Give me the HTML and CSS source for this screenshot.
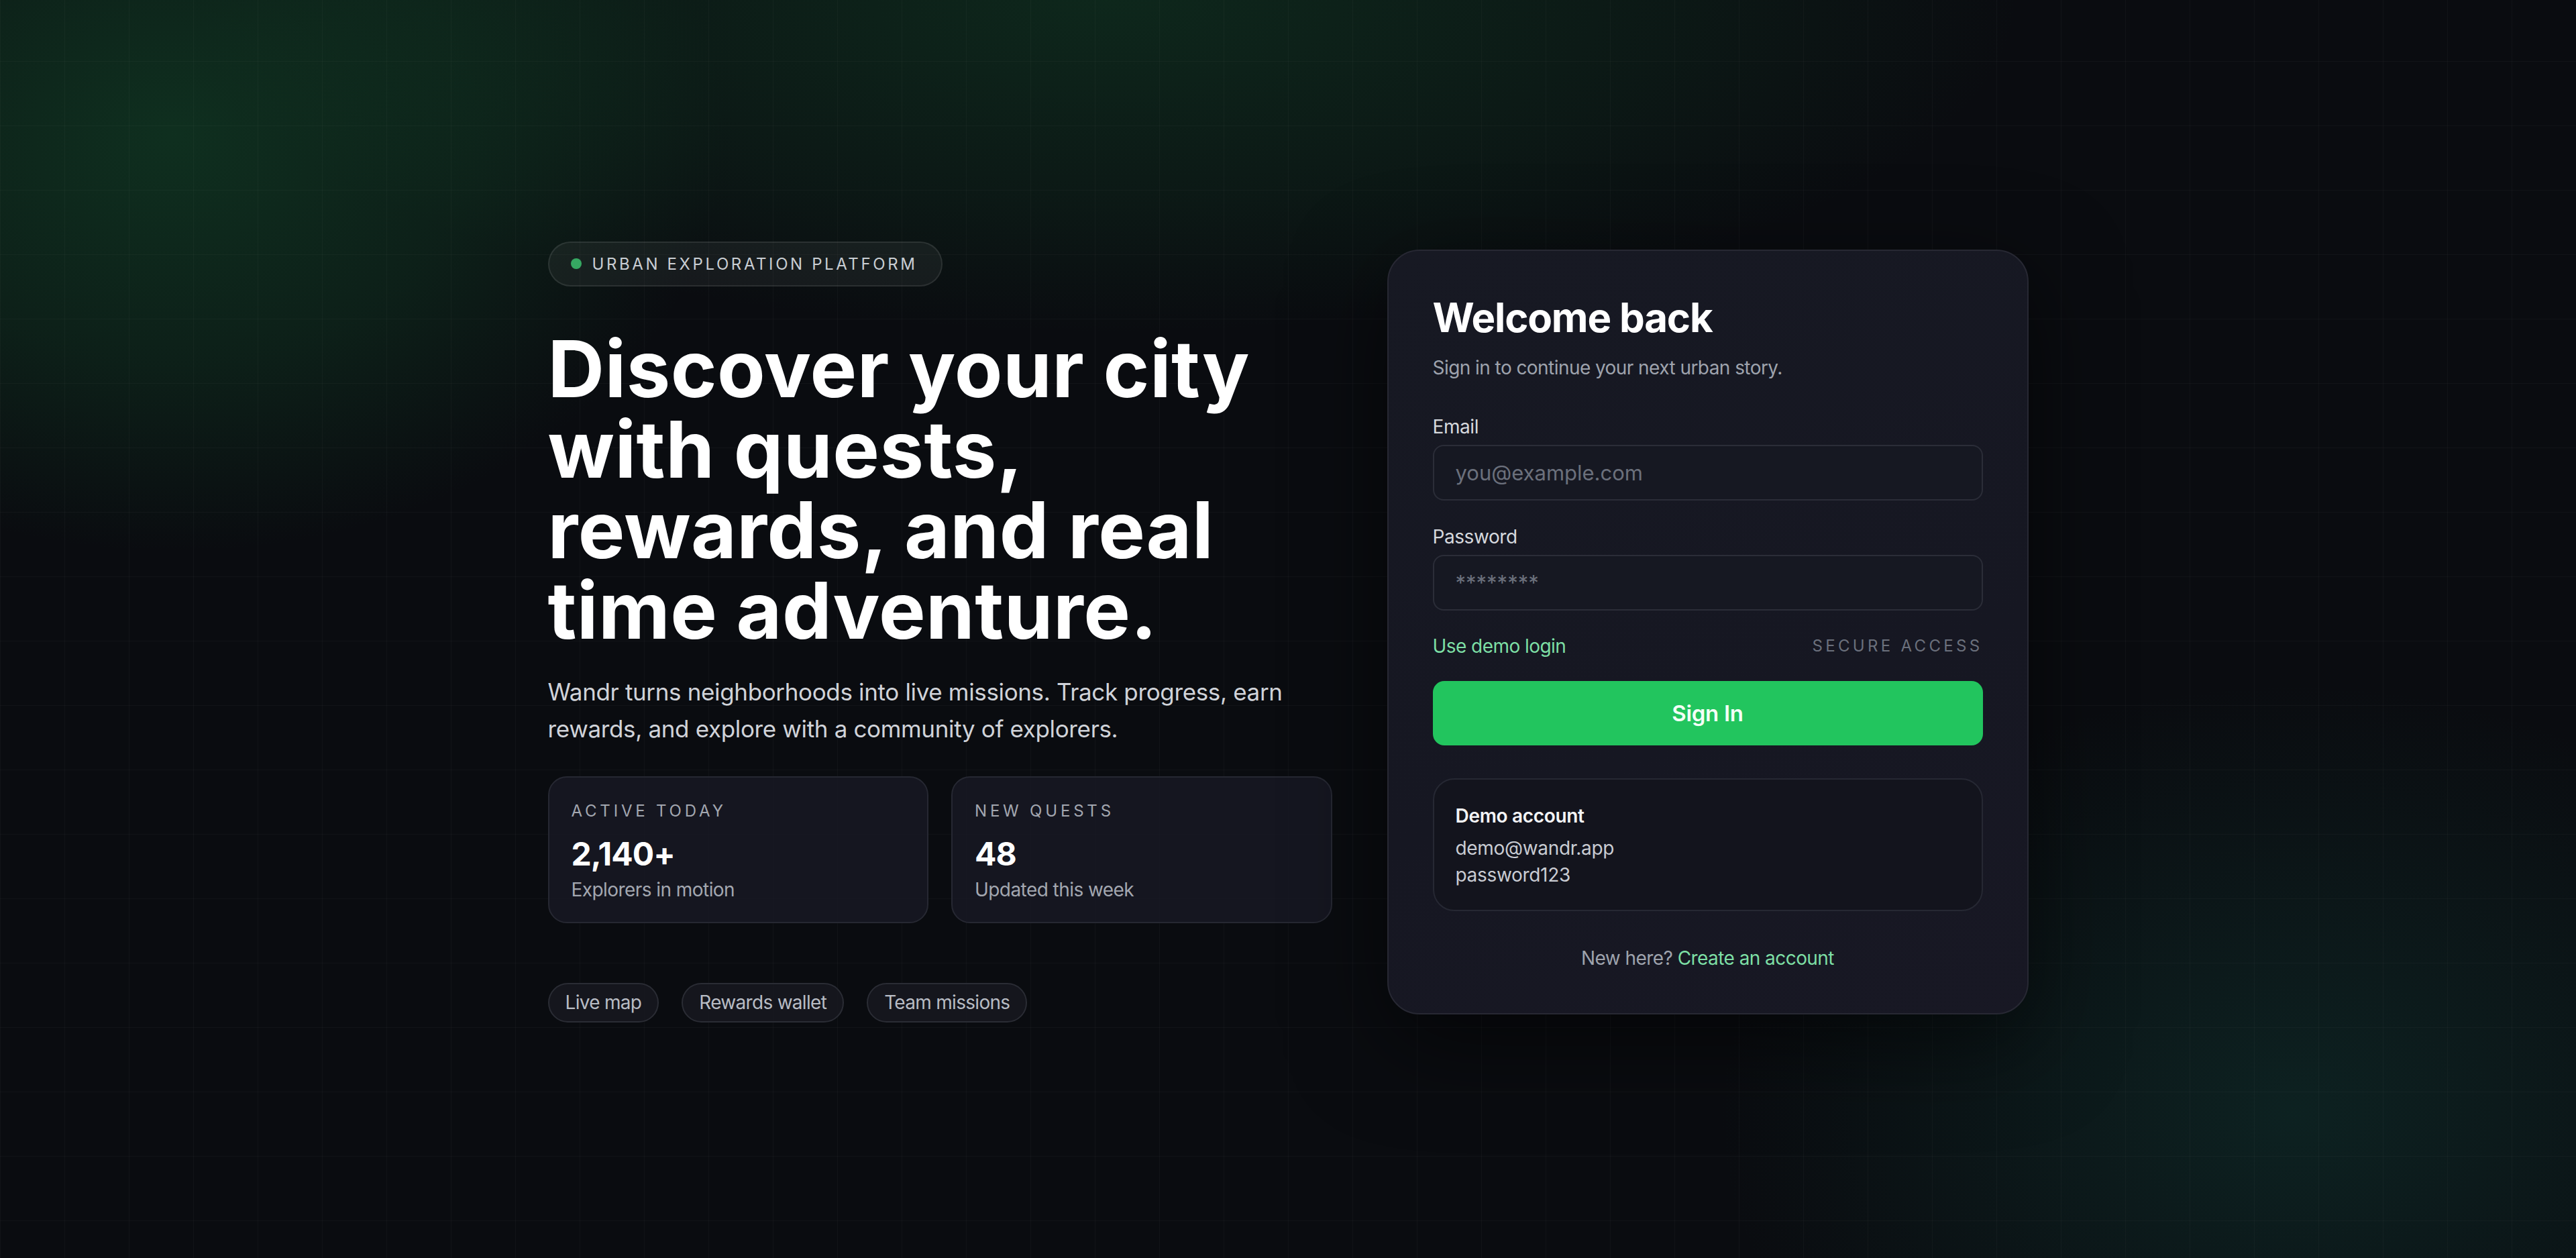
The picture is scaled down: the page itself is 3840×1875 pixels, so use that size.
FILE: index.html
```html
<!DOCTYPE html>
<html lang="en">
<head>
<meta charset="utf-8">
<title>Wandr — Sign in</title>
<link rel="stylesheet" href="styles.css">
</head>
<body>
<main class="page">
  <section class="hero">
    <div class="badge"><span class="badge-dot"></span><span class="badge-text">URBAN EXPLORATION PLATFORM</span></div>
    <h1 class="headline">Discover your city with quests, rewards, and real time adventure.</h1>
    <p class="lead">Wandr turns neighborhoods into live missions. Track progress, earn rewards, and explore with a community of explorers.</p>
    <div class="stats">
      <div class="stat">
        <div class="stat-label">ACTIVE TODAY</div>
        <div class="stat-value">2,140+</div>
        <div class="stat-note">Explorers in motion</div>
      </div>
      <div class="stat">
        <div class="stat-label">NEW QUESTS</div>
        <div class="stat-value">48</div>
        <div class="stat-note">Updated this week</div>
      </div>
    </div>
    <div class="chips">
      <span class="chip">Live map</span>
      <span class="chip">Rewards wallet</span>
      <span class="chip">Team missions</span>
    </div>
  </section>

  <section class="card">
    <h2 class="card-title">Welcome back</h2>
    <p class="card-sub">Sign in to continue your next urban story.</p>
    <form class="form">
      <label class="field-label" for="email">Email</label>
      <input class="field" id="email" type="email" placeholder="you@example.com">
      <label class="field-label field-label-2" for="password">Password</label>
      <input class="field" id="password" type="text" placeholder="********">
      <div class="form-row">
        <a class="demo-link" href="#">Use demo login</a>
        <span class="secure">SECURE ACCESS</span>
      </div>
      <button class="btn" type="button">Sign In</button>
    </form>
    <div class="demo-box">
      <div class="demo-title">Demo account</div>
      <div class="demo-line">demo@wandr.app</div>
      <div class="demo-line">password123</div>
    </div>
    <p class="footer-note">New here? <a class="create-link" href="#">Create an account</a></p>
  </section>
</main>
</body>
</html>
```

FILE: styles.css
```css
* { box-sizing: border-box; }

html, body {
  margin: 0;
  padding: 0;
}

body {
  min-height: 100vh;
  font-family: "Inter", "Noto Sans", sans-serif;
  color: #e5e7eb;
  background-color: #0a0c10;
  background-image:
    linear-gradient(to right, rgba(255,255,255,0.028) 1px, transparent 1px),
    linear-gradient(to bottom, rgba(255,255,255,0.028) 1px, transparent 1px),
    radial-gradient(ellipse 1000px 760px at 260px 200px, rgba(24,110,58,0.36), rgba(24,110,58,0.2) 45%, transparent 82%),
    radial-gradient(ellipse 1700px 620px at 1650px 0px, rgba(24,110,58,0.28), rgba(24,110,58,0.12) 50%, transparent 80%),
    radial-gradient(ellipse 1100px 820px at 3420px 1660px, rgba(22,95,82,0.26), transparent 78%);
  background-size: 96px 96px, 96px 96px, auto, auto, auto;
  background-position: 0 0, 0 -5px, 0 0, 0 0, 0 0;
}

.page {
  min-height: 100vh;
  padding-top: 8px;
  display: grid;
  grid-template-columns: 1169px 956px;
  column-gap: 82px;
  justify-content: center;
  align-items: center;
}

/* ---------- hero ---------- */
.hero {
  display: flex;
  flex-direction: column;
  align-items: flex-start;
}

.badge {
  display: inline-flex;
  align-items: center;
  gap: 16px;
  height: 67px;
  padding: 0 35px 0 32px;
  border-radius: 999px;
  border: 2px solid rgba(255,255,255,0.09);
  background: rgba(255,255,255,0.05);
}

.badge-dot {
  width: 16px;
  height: 16px;
  border-radius: 50%;
  background: #36a862;
}

.badge-text {
  font-size: 24px;
  letter-spacing: 0.15em;
  color: #c9ced3;
  font-weight: 400;
}

.headline {
  margin: 63px 0 0;
  max-width: 1100px;
  font-size: 117px;
  line-height: 120px;
  font-weight: 700;
  letter-spacing: 0.004em;
  color: #ffffff;
}

.lead {
  margin: 34px 0 0;
  max-width: 1130px;
  font-size: 35px;
  line-height: 55px;
  letter-spacing: -0.01em;
  color: #d0d3d9;
  font-weight: 400;
}

.stats {
  margin-top: 43px;
  width: 100%;
  display: grid;
  grid-template-columns: 1fr 1fr;
  gap: 34px;
}

.stat {
  height: 219px;
  padding: 34px 32px 0 33px;
  border-radius: 28px;
  border: 2px solid #262832;
  background: rgba(24,25,35,0.85);
}

.stat-label {
  font-size: 24px;
  line-height: 32px;
  letter-spacing: 0.2em;
  color: #a3a7b0;
}

.stat-value {
  margin-top: 20px;
  font-size: 48px;
  line-height: 56px;
  font-weight: 700;
  letter-spacing: -0.02em;
  color: #ffffff;
}

.stat-note {
  margin-top: 5px;
  font-size: 28px;
  line-height: 40px;
  letter-spacing: -0.02em;
  color: #a3a7b0;
}

.chips {
  margin-top: 89px;
  display: flex;
  gap: 34px;
}

.chip {
  height: 59px;
  display: inline-flex;
  align-items: center;
  padding: 0 24px;
  border-radius: 999px;
  border: 2px solid #2a2c34;
  background: rgba(24,25,32,0.8);
  font-size: 28px;
  letter-spacing: -0.025em;
  color: #b8bcc4;
}

/* ---------- card ---------- */
.card {
  padding: 63px 66px 64px;
  border-radius: 48px;
  border: 2px solid #272833;
  background: linear-gradient(160deg, #171923 0%, #161722 60%, #181824 100%);
  box-shadow: 0 40px 140px rgba(0,0,0,0.55);
}

.card-title {
  margin: 0;
  font-size: 60px;
  line-height: 72px;
  font-weight: 700;
  letter-spacing: -0.02em;
  color: #ffffff;
}

.card-sub {
  margin: 17px 0 0;
  font-size: 28px;
  line-height: 44px;
  letter-spacing: -0.02em;
  color: #9ea3ad;
}

.form {
  margin-top: 48px;
  display: flex;
  flex-direction: column;
}

.field-label {
  font-size: 28px;
  line-height: 36px;
  letter-spacing: -0.015em;
  color: #d6d9de;
}

.field-label-2 { margin-top: 36px; }

.field {
  margin-top: 9px;
  height: 83px;
  padding: 0 32px;
  border-radius: 16px;
  border: 2px solid #2b2d38;
  background: #161822;
  font-family: inherit;
  font-size: 31px;
  color: #e5e7eb;
  outline: none;
}

.field::placeholder { color: #6b707c; }

.form-row {
  margin-top: 35px;
  display: flex;
  justify-content: space-between;
  align-items: center;
  line-height: 36px;
}

.demo-link {
  font-size: 28px;
  letter-spacing: -0.02em;
  color: #7ddfa5;
  text-decoration: none;
}

.secure {
  font-size: 24px;
  letter-spacing: 0.18em;
  color: #6b707c;
}

.btn {
  margin-top: 34px;
  height: 96px;
  border: none;
  border-radius: 17px;
  background: #22c55e;
  color: #f4fff7;
  font-family: inherit;
  font-size: 33px;
  font-weight: 600;
  letter-spacing: -0.01em;
  cursor: pointer;
}

.demo-box {
  margin-top: 49px;
  padding: 36px 32px 32px;
  border-radius: 32px;
  border: 2px solid #262833;
  background: #13141d;
  letter-spacing: -0.02em;
}

.demo-title {
  font-size: 28px;
  line-height: 36px;
  font-weight: 600;
  color: #f3f4f6;
}

.demo-line {
  font-size: 28px;
  line-height: 40px;
  color: #c9ccd3;
}

.demo-title + .demo-line { margin-top: 10px; }

.footer-note {
  margin: 52px 0 0;
  text-align: center;
  font-size: 28px;
  line-height: 36px;
  letter-spacing: -0.02em;
  color: #9ea3ad;
}

.create-link {
  color: #7ddfa5;
  text-decoration: none;
}
```
